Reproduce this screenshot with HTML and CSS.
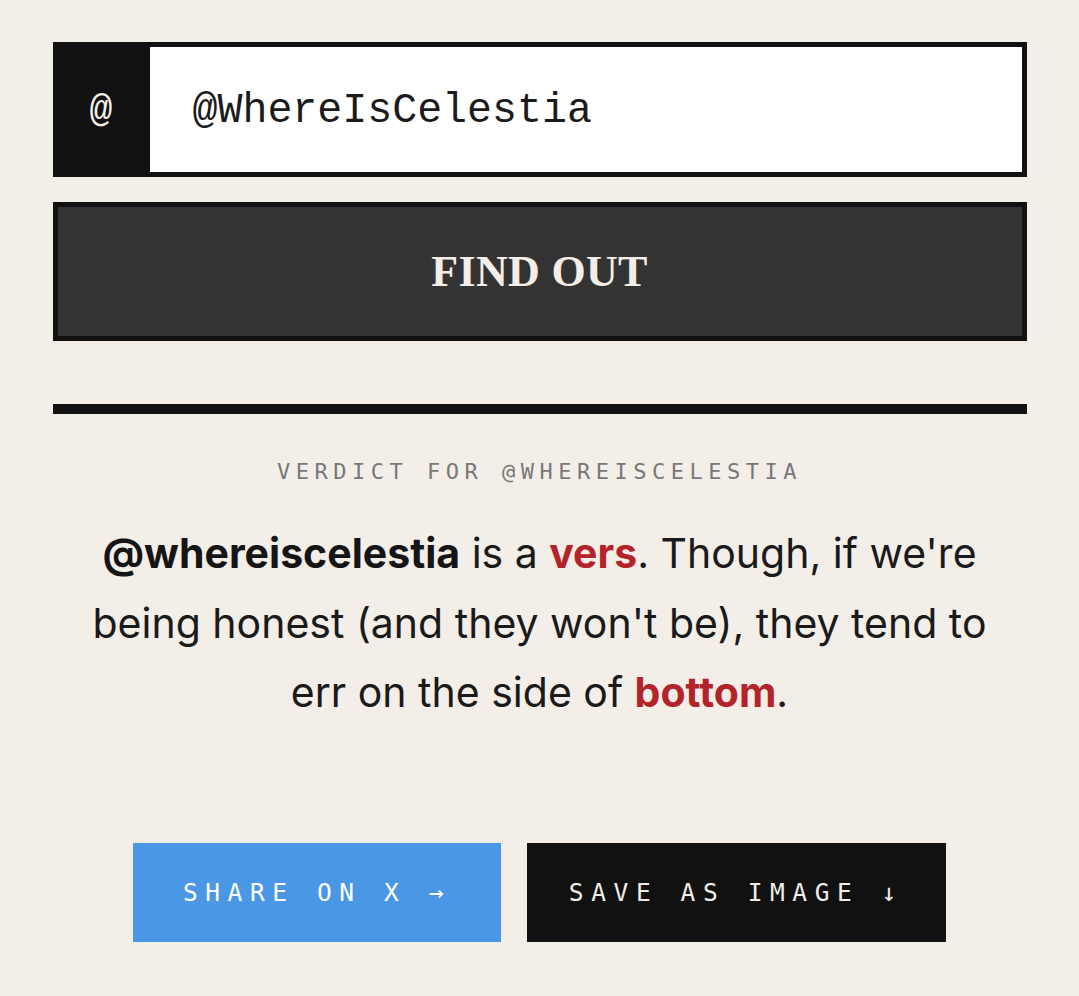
FILE: index.html
```html
<!DOCTYPE html>
<html lang="en">
<head>
<meta charset="utf-8">
<title>Verdict</title>
<link rel="stylesheet" href="styles.css">
</head>
<body>
<main class="page">
  <div class="handle-field">
    <span class="handle-prefix">@</span>
    <span class="handle-input">@WhereIsCelestia</span>
  </div>
  <button class="find-btn">FIND OUT</button>
  <hr class="divider">
  <section class="verdict">
    <p class="verdict-label">VERDICT FOR @WHEREISCELESTIA</p>
    <p class="verdict-text"><strong class="who">@whereiscelestia</strong> is a <strong class="hl">vers</strong>. Though, if we're being honest (and they won't be), they tend to err on the side of <strong class="hl">bottom</strong>.</p>
  </section>
  <div class="actions">
    <button class="act act-share">SHARE ON X →</button>
    <button class="act act-save">SAVE AS IMAGE ↓</button>
  </div>
</main>
</body>
</html>
```

FILE: styles.css
```css
html, body {
  margin: 0;
  padding: 0;
  background: #f3eee8;
}
body {
  font-family: "Inter", "Liberation Sans", sans-serif;
  color: #151515;
}
.page {
  width: 974px;
  margin: 0 auto;
  padding-top: 42px;
  display: flex;
  flex-direction: column;
}
.handle-field {
  display: flex;
  height: 135px;
  box-sizing: border-box;
  border: 5px solid #111;
  background: #fff;
}
.handle-prefix {
  flex: 0 0 92px;
  box-sizing: border-box;
  background: #111;
  color: #f3eee8;
  display: flex;
  align-items: center;
  justify-content: center;
  font-family: "Liberation Mono", monospace;
  font-size: 38px;
  padding-right: 5px;
  padding-top: 2px;
}
.handle-input {
  flex: 1;
  display: flex;
  align-items: center;
  padding-left: 43px;
  padding-top: 2px;
  font-family: "Liberation Mono", monospace;
  font-size: 41.6px;
  color: #1b1b1b;
}
.find-btn {
  margin-top: 25px;
  height: 139px;
  box-sizing: border-box;
  border: 5px solid #111;
  background: #333;
  color: #f3eee8;
  font-family: "Liberation Serif", serif;
  font-weight: 700;
  font-size: 44px;
  letter-spacing: 0.3px;
  padding: 0;
  cursor: pointer;
}
.divider {
  margin: 63px 0 0;
  height: 10px;
  border: 0;
  background: #111;
}
.verdict {
  display: flex;
  flex-direction: column;
  align-items: center;
  text-align: center;
}
.verdict-label {
  margin: 45px 0 0;
  font-family: "DejaVu Sans Mono", monospace;
  font-size: 22px;
  letter-spacing: 5.5px;
  color: #787878;
}
.verdict-text {
  margin: 35px 0 0;
  font-size: 41px;
  line-height: 69.5px;
  color: #1a1a1a;
  padding: 0 18px;
}
.who {
  font-weight: 700;
  color: #151515;
}
.hl {
  font-weight: 700;
  color: #b3242a;
}
.actions {
  margin-top: 115px;
  display: flex;
  justify-content: center;
  gap: 26px;
}
.act {
  height: 99px;
  border: 0;
  padding: 0;
  white-space: nowrap;
  font-family: "DejaVu Sans Mono", monospace;
  font-weight: 400;
  font-size: 24.5px;
  letter-spacing: 7.6px;
  cursor: pointer;
}
.act-share {
  width: 368px;
  background: #4a98e5;
  color: #fff;
}
.act-save {
  width: 419px;
  background: #111;
  color: #f3eee8;
}
```
